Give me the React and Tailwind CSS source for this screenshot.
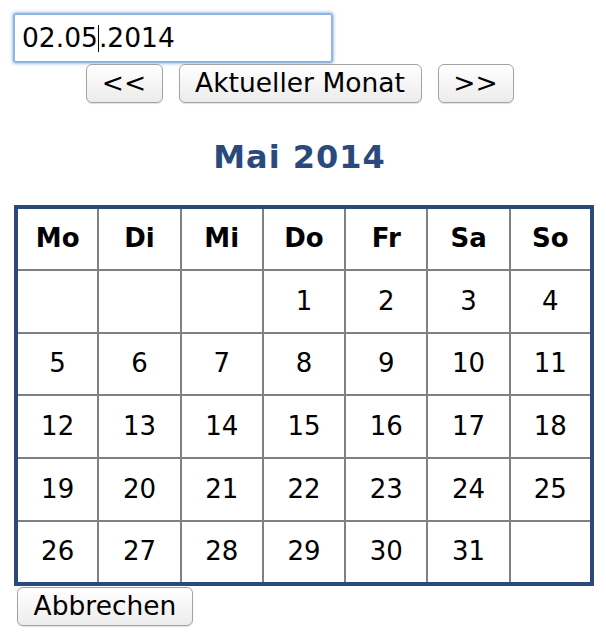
import React from "react";

const days = ["Mo", "Di", "Mi", "Do", "Fr", "Sa", "So"];
const weeks = [
  ["", "", "", "1", "2", "3", "4"],
  ["5", "6", "7", "8", "9", "10", "11"],
  ["12", "13", "14", "15", "16", "17", "18"],
  ["19", "20", "21", "22", "23", "24", "25"],
  ["26", "27", "28", "29", "30", "31", ""],
];

function Btn({ children, className = "" }) {
  return (
    <button
      className={
        "h-[39px] rounded-[6px] border border-[#a3a3a3] bg-gradient-to-b from-[#ffffff] to-[#ececec] text-[26.5px] leading-none text-black shadow-[0_1px_1px_rgba(0,0,0,0.12)] " +
        className
      }
      style={{ fontFamily: '"DejaVu Sans", Verdana, sans-serif' }}
    >
      {children}
    </button>
  );
}

export default function App() {
  const font = { fontFamily: '"DejaVu Sans", Verdana, sans-serif' };
  return (
    <div className="relative h-[634px] w-[606px] bg-white" style={font}>
      <div className="pl-[13px] pt-[13px]">
        <div className="flex h-[50px] w-[320px] items-center rounded-[3px] border-2 border-[#8fb6e3] pl-[7px] text-[26.5px] text-black shadow-[0_0_3px_1px_rgba(100,150,220,0.55)]">
          <span>02.05</span>
          <span className="inline-block h-[27px] w-[1px] bg-black" />
          <span>.2014</span>
        </div>
      </div>
      <div className="flex w-[599px] justify-center gap-[16px] pt-[1px]">
        <Btn className="w-[77px]">&lt;&lt;</Btn>
        <Btn className="w-[243px]">Aktueller Monat</Btn>
        <Btn className="w-[76px]">&gt;&gt;</Btn>
      </div>
      <div className="flex w-[599px] justify-center pt-[36px]">
        <h1 className="text-[32px] font-bold leading-[36px] tracking-[1px] text-[#2a4a7e]">Mai 2014</h1>
      </div>
      <div className="pl-[14px] pt-[30px]">
        <table className="w-[580px] border-collapse border-4 border-[#2a4a7e] text-[26px] text-black">
          <thead>
            <tr>
              {days.map((d) => (
                <th
                  key={d}
                  className="h-[62.8px] w-[82px] border-2 border-[#808080] p-0 text-center font-bold"
                >
                  {d}
                </th>
              ))}
            </tr>
          </thead>
          <tbody>
            {weeks.map((w, i) => (
              <tr key={i}>
                {w.map((d, j) => (
                  <td
                    key={j}
                    className="h-[62.8px] border-2 border-[#808080] p-0 text-center"
                  >
                    {d}
                  </td>
                ))}
              </tr>
            ))}
          </tbody>
        </table>
      </div>
      <div className="pl-[17px] pt-[1px]">
        <Btn className="w-[176px]">Abbrechen</Btn>
      </div>
    </div>
  );
}
